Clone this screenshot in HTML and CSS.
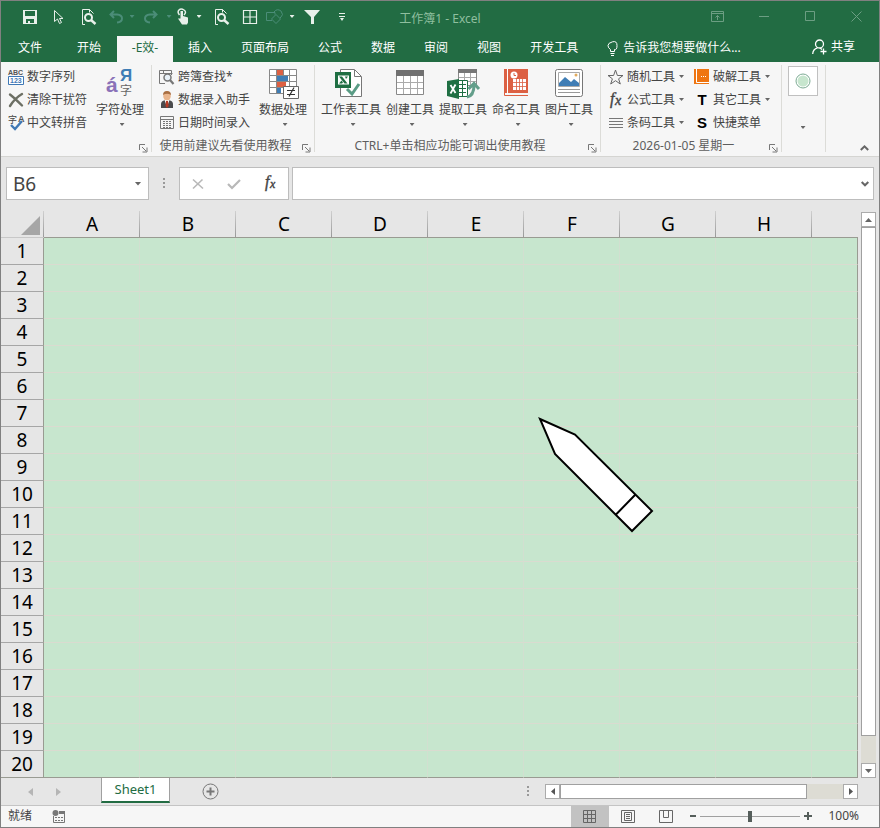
FILE: index.html
```html
<!DOCTYPE html>
<html lang="zh-CN">
<head>
<meta charset="utf-8">
<title>工作簿1 - Excel</title>
<link rel="stylesheet" href="styles.css">
</head>
<body>
<header class="titlebar">
  <div class="quick">
    <button aria-label="保存"><svg width="14" height="14" viewBox="0 0 14 14"><path fill="#e8f0ea" fill-rule="evenodd" d="M0 0h14v14H0zM2 1v5h10V1zM3 9v4h2v-2h2v2h4V9z"/></svg></button>
    <button aria-label="选择"><svg width="12" height="16" viewBox="0 0 12 16" fill="none" stroke="#e8f0ea"><path d="M1.500 1.500v11l3-2.500 2 4.500 2-1-2-4h3.500z"/></svg></button>
    <button aria-label="打印预览"><svg width="16" height="16" viewBox="0 0 16 16" fill="none" stroke="#e8f0ea"><path d="M4 15.500H1.500V.5h7l4 4M8.500.5v3"/><circle cx="7.500" cy="8.500" r="3.500" stroke-width="2"/><path d="M10 11l4.500 4" stroke-width="2.500"/></svg></button>
    <button aria-label="撤消"><svg width="14" height="14" viewBox="0 0 14 14" fill="none" stroke="#4b8d78" stroke-width="2"><path d="M5 1L1.500 4.500 5 8M2 4.500h6q5 .5 5 4T8 12.500"/></svg></button>
    <button aria-label="撤消列表"><i class="caret dim"></i></button>
    <button aria-label="恢复"><svg width="14" height="14" viewBox="0 0 14 14" fill="none" stroke="#4b8d78" stroke-width="2"><path d="M9 1l3.500 3.500L9 8M12 4.500H6q-5 .5-5 4t5 4"/></svg></button>
    <button aria-label="恢复列表"><i class="caret dim"></i></button>
    <button aria-label="触摸模式"><svg width="13" height="17" viewBox="0 0 13 17"><path d="M2.500 7Q0 4 2 2t5 0 0 5" fill="none" stroke="#e8f0ea" stroke-width="1.500"/><path fill="#e8f0ea" d="M3.500 3h2.500v5l5 1.500v5l-1 2H5L1 10.500h2.500z"/></svg></button>
    <button aria-label="触摸模式列表"><i class="caret"></i></button>
    <button aria-label="查找"><svg width="16" height="16" viewBox="0 0 16 16" fill="none" stroke="#e8f0ea"><path d="M4 15.500H1.500V.5h7l4 4M8.500.5v3"/><circle cx="7.500" cy="8.500" r="3.500" stroke-width="2"/><path d="M10 11l4.500 4" stroke-width="2.500"/></svg></button>
    <button aria-label="边框"><svg width="14" height="14" viewBox="0 0 14 14" fill="none" stroke="#e8f0ea"><path d="M.5.5h13v13H.5zM7 1v12M1 7h12" stroke-width="1.200"/></svg></button>
    <button aria-label="形状"><svg width="17" height="15" viewBox="0 0 17 15" fill="none" stroke="#4b8d78"><path d="M6 11.500H.5v-8H9v2M8 3q3-4 7-1 3 4 0 6l-1 1M10 5.500l4.500 4.500-4.500 4.500L5.500 10z"/></svg></button>
    <button aria-label="形状列表"><i class="caret"></i></button>
    <button aria-label="筛选"><svg width="16" height="14" viewBox="0 0 16 14"><path fill="#e8f0ea" d="M0 0h16L10 7v7H7V7z"/></svg></button>
    <button aria-label="自定义快速访问工具栏"><svg width="6" height="8" viewBox="0 0 6 8"><path fill="#e8f0ea" d="M0 0h6v1H0zM0 3h6v1H0zM1 5h4L3 8z"/></svg></button>
  </div>
  <h1>工作簿1 - Excel</h1>
  <div class="window-controls">
    <button aria-label="功能区显示选项"><svg width="14" height="11" viewBox="0 0 14 11"><path d="M.5.5h12v10H.5zM1 2.500h12M6.500 9V4.500M4.500 6.500l2-2 2 2"/></svg></button>
    <button aria-label="最小化"><svg width="11" height="11" viewBox="0 0 11 11"><path d="M0 5.500h10"/></svg></button>
    <button aria-label="最大化"><svg width="11" height="11" viewBox="0 0 11 11"><path d="M.5.5h9v9h-9z"/></svg></button>
    <button aria-label="关闭"><svg width="11" height="11" viewBox="0 0 11 11"><path d="M.5.5l10 10M10.500.5l-10 10"/></svg></button>
  </div>
</header>
<nav class="tabs">
  <button class="file">文件</button><button>开始</button><button class="active">-E效-</button><button>插入</button><button>页面布局</button><button>公式</button><button>数据</button><button>审阅</button><button>视图</button><button>开发工具</button>
  <button class="tell"><svg width="11" height="15" viewBox="0 0 11 15" fill="none" stroke="#fff"><path d="M3.500 10.500v-2Q1 7 1 4.500T5.500.8 10 4.500 7.500 8.500v2zM3.500 12.500h4M4 14.500h3"/></svg>告诉我您想要做什么...</button>
  <button class="share"><svg width="15" height="16" viewBox="0 0 15 16" fill="none" stroke="#fff" stroke-width="1.300"><circle cx="7.500" cy="5" r="4"/><path d="M.7 15q.3-5 4.800-6.200M8 9l2 1.500M11.500 9.500v6M8.500 12.500h6"/></svg>共享</button>
</nav>
<main>
<section class="ribbon">
  <div class="group g1">
    <div class="tools">
      <div class="stack">
        <button><svg width="16" height="16" viewBox="0 0 16 16"><text x="0" y="6" class="abc">ABC</text><path d="M.5 7.500h15v8H.5z" fill="#fff" stroke="#3f78b5"/><text x="2" y="14" class="num">123</text></svg>数字序列</button>
        <button><svg width="16" height="16" viewBox="0 0 16 16" fill="none" stroke="#6c6f64" stroke-linecap="round"><path d="M2 2.500q5 4 12 11M14 2Q7 6 2 14" stroke-width="2.400"/></svg>清除干扰符</button>
        <button><svg width="16" height="16" viewBox="0 0 16 16"><text x="0" y="8" class="zi">字</text><text x="10" y="7" class="abc big">A</text><path d="M3 10l4 4 7-8" fill="none" stroke="#3f78b5" stroke-width="2.400"/></svg>中文转拼音</button>
      </div>
      <button class="large"><svg width="30" height="32" viewBox="0 0 30 32"><text x="1" y="25" class="acute">á</text><text x="15" y="14" class="ya">Я</text><text x="15" y="28" class="zi lg">字</text></svg>字符处理<i class="caret"></i></button>
    </div>
    <footer><span></span><button class="launch" aria-label="字符选项"><svg width="9" height="9" viewBox="0 0 9 9"><path d="M.5 6V.5H6M3 3l4 4M8 3.500V8H3.500" /></svg></button></footer>
  </div>
  <div class="group g2">
    <div class="tools">
      <div class="stack">
        <button><svg width="16" height="16" viewBox="0 0 16 16" fill="none" stroke="#777"><path d="M6 14.500H.5v-13h12M.5 4.500h13M4.500 1.500v3M12.500 1.500V6"/><circle cx="8.500" cy="8.500" r="3.500" fill="#e8f1f8" stroke-width="1.500"/><path d="M11 11l3.500 4" stroke-width="2.200"/></svg>跨簿查找*</button>
        <button><svg width="16" height="17" viewBox="0 0 16 17"><path d="M2 17v-4q0-3 4-4h4q4 1 4 4v4z" fill="#4b4b4d"/><path d="M5.500 9h5L8 16z" fill="#fff"/><path d="M7 10h2l.7 5L8 17l-1.500-2z" fill="#b83a24"/><ellipse cx="8" cy="5" rx="3.800" ry="4.500" fill="#e9b58c"/><path d="M4 4q0-4 4-4t4 4Q8 1.500 4 4" fill="#a96f42"/></svg>数据录入助手</button>
        <button><svg width="16" height="16" viewBox="0 0 16 16" fill="none" stroke="#777"><path d="M1.500 1.500h13v12h-13zM2 4.500h12"/><path d="M4 6.500h9M4 8.500h9M4 10.500h9M4 12.500h9" stroke-dasharray="2 1"/></svg>日期时间录入</button>
      </div>
      <button class="large"><svg width="32" height="32" viewBox="0 0 32 32"><path d="M2.500 2.500h27v24h-27z" fill="#fff" stroke="#888"/><path d="M3 8.500h26M3 14.500h26M3 20.500h26M9.500 3v23M16.500 3v23M22.500 3v23" stroke="#888"/><path d="M10 3h6v5h-6zM10 15h9v5h-9z" fill="#dc6043"/><path d="M10 9h11v5H10zM10 21h4v5h-4z" fill="#3f7db5"/><path d="M16.500 19.500h15v12h-15z" fill="#fff" stroke="#666"/><path d="M20 23.500h8M20 27.500h8M27 20.500l-5 9" stroke="#333" fill="none" stroke-width="1.200"/></svg>数据处理<i class="caret"></i></button>
    </div>
    <footer><span>使用前建议先看使用教程</span><button class="launch" aria-label="数据选项"><svg width="9" height="9" viewBox="0 0 9 9"><path d="M.5 6V.5H6M3 3l4 4M8 3.500V8H3.500"/></svg></button></footer>
  </div>
  <div class="group g3">
    <div class="tools">
      <button class="large"><svg width="32" height="32" viewBox="0 0 32 32"><path d="M5.500 2.500h14l7 7v20h-21z" fill="#fff" stroke="#777"/><path d="M19.500 3v6.500H26" fill="none" stroke="#777"/><path d="M0 5h16v16H0z" fill="#1f6f43"/><path d="M3 8.500h11v9H3z" fill="#fff"/><path d="M4 9.500h3l5.500 7h-3zM10 9.500h3l-2 2.500M4 16.500l2.500-3 1.500 2-1 1z" fill="#1f6f43"/><path d="M12 22l5 5 7-10" fill="none" stroke="#5a9c85" stroke-width="3"/></svg>工作表工具<i class="caret"></i></button>
      <button class="large"><svg width="32" height="32" viewBox="0 0 32 32"><path d="M2.500 3.500h27v24h-27z" fill="#fff" stroke="#888"/><path d="M2 3h28v6H2z" fill="#707070"/><path d="M3 15.500h26M3 21.500h26M9.500 9v18M16.500 9v18M23.500 9v18" stroke="#aaa"/></svg>创建工具<i class="caret"></i></button>
      <button class="large"><svg width="32" height="32" viewBox="0 0 32 32"><path d="M11.500 2.500h18v16h-18z" fill="#fff" stroke="#888"/><path d="M11 2h19v4H11z" fill="#777"/><path d="M12 10.500h17M12 14.500h17M17.500 6v12M23.500 6v12" stroke="#aaa"/><path d="M10.500 13.500h10v16h-10z" fill="#fff" stroke="#1f6f43"/><path d="M11 17.500h8M11 21.500h8M11 25.500h8M15.500 14v15" stroke="#1f6f43"/><path d="M0 14l12-2v20L0 29z" fill="#1f6f43"/><path d="M3.500 18l5 8M8.500 17.500L3.500 26.500" stroke="#fff" stroke-width="1.800"/><path d="M20 30q7-1 7-12M21.500 22l5.500-5.500 5 5.500" fill="none" stroke="#639e8a" stroke-width="3"/></svg>提取工具<i class="caret"></i></button>
      <button class="large"><svg width="32" height="32" viewBox="0 0 32 32"><path d="M4 2h24v24H4z" fill="#dc6043"/><path d="M4.500 2v26.500H28" fill="none" stroke="#dc6043"/><path d="M7.500 2v25" stroke="#fff"/><circle cx="14" cy="8" r="3.500" fill="#fff"/><path d="M14 6v2.500h2" stroke="#dc6043" fill="none"/><path d="M13 12h13v11H13z" fill="#fff"/><path d="M13 15.500h13M13 19.500h13M16.500 12v11M19.500 12v11M22.500 12v11" stroke="#dc6043" stroke-width=".8"/></svg>命名工具<i class="caret"></i></button>
      <button class="large"><svg width="32" height="32" viewBox="0 0 32 32"><rect x="2.500" y="2.500" width="27" height="27" rx="2" fill="#fff" stroke="#777"/><path d="M5.500 5.500h21v14h-21z" fill="#fff" stroke="#aaa"/><path d="M6 19v-3l6-6 6 5 3-3 5 4v3z" fill="#3f7db5"/><circle cx="23" cy="8" r="1.500" fill="#e2ab5c"/><path d="M5 22.500h22M5 25.500h22" stroke="#999"/></svg>图片工具<i class="caret"></i></button>
    </div>
    <footer><span>CTRL+单击相应功能可调出使用教程</span><button class="launch" aria-label="工具选项"><svg width="9" height="9" viewBox="0 0 9 9"><path d="M.5 6V.5H6M3 3l4 4M8 3.500V8H3.500"/></svg></button></footer>
  </div>
  <div class="group g4">
    <div class="tools">
      <div class="stack">
        <button><svg width="16" height="16" viewBox="0 0 16 16" fill="none" stroke="#666"><path d="M7.500 1l1.900 5.500h5.600l-4.400 3.300 1.700 5.200-4.800-3.300L2.700 15l1.700-5.200L0 6.500h5.600z"/></svg>随机工具<i class="caret"></i></button>
        <button><svg width="16" height="16" viewBox="0 0 16 16"><text x="2" y="12" class="fx">f</text><text x="7" y="13" class="fx small">x</text></svg>公式工具<i class="caret"></i></button>
        <button><svg width="16" height="16" viewBox="0 0 16 16" stroke="#777"><path d="M1 3.500h14M1 6.500h14M1 9.500h14M1 12.500h14"/></svg>条码工具<i class="caret"></i></button>
      </div>
      <div class="stack">
        <button><svg width="16" height="16" viewBox="0 0 16 16"><path d="M0 0h15v15H0z" fill="#ef7511"/><path d="M2.500 0v13.500H15" stroke="#fff" fill="none"/><path d="M7 7h1v1H7zM9 7h1v1H9zM11 7h1v1h-1z" fill="#fff"/></svg>破解工具<i class="caret"></i></button>
        <button><svg width="16" height="16" viewBox="0 0 16 16"><text x="8" y="13" class="letter">T</text></svg>其它工具<i class="caret"></i></button>
        <button><svg width="16" height="16" viewBox="0 0 16 16"><text x="8" y="13" class="letter">S</text></svg>快捷菜单</button>
      </div>
    </div>
    <footer><span>2026-01-05 星期一</span><button class="launch" aria-label="其它选项"><svg width="9" height="9" viewBox="0 0 9 9"><path d="M.5 6V.5H6M3 3l4 4M8 3.500V8H3.500"/></svg></button></footer>
  </div>
  <div class="group g5">
    <button class="swatch" aria-label="护眼颜色"><span><svg width="16" height="16" viewBox="0 0 16 16"><circle cx="8" cy="8" r="7" fill="#fff" stroke="#7cab93"/><circle cx="8" cy="8" r="5.500" fill="#c7e6ce"/></svg></span><i class="caret"></i></button>
  </div>
  <button class="collapse" aria-label="折叠功能区"><svg width="9" height="6" viewBox="0 0 9 6" fill="none" stroke="#666" stroke-width="2"><path d="M.8 5l3.700-3.700L8.200 5"/></svg></button>
</section>
<section class="formula">
  <div class="box name"><input aria-label="名称框" value="B6"><button aria-label="名称列表"><i class="caret wide"></i></button></div>
  <svg class="dots" width="3" height="11" viewBox="0 0 3 11"><path fill="#999" d="M0 0h2v2H0zM0 4h2v2H0zM0 8h2v2H0z"/></svg>
  <div class="box actions">
    <button aria-label="取消"><svg width="12" height="12" viewBox="0 0 12 12" fill="none" stroke="#b8b8b8" stroke-width="1.600"><path d="M1 1.500l10 9M10.500 1.500L1 10.500"/></svg></button>
    <button aria-label="输入"><svg width="14" height="12" viewBox="0 0 14 12" fill="none" stroke="#b8b8b8" stroke-width="2.200"><path d="M1 6l4 4 8-8"/></svg></button>
    <button aria-label="插入函数"><svg width="14" height="15" viewBox="0 0 14 15"><text x="2" y="11" class="fx">f</text><text x="7" y="12" class="fx tiny">x</text></svg></button>
  </div>
  <div class="box entry"><input aria-label="编辑栏"><button aria-label="展开编辑栏"><svg width="8" height="6" viewBox="0 0 8 6" fill="none" stroke="#666" stroke-width="2"><path d="M.7 1L4 4.300 7.300 1"/></svg></button></div>
</section>
<section class="sheet">
  <div class="canvas">
  <table>
    <colgroup><col class="rowcol"><col class="c"><col class="c"><col class="c"><col class="c"><col class="c"><col class="c"><col class="c"><col class="c"><col></colgroup>
    <thead><tr><th aria-label="全选"><i class="corner"></i></th><th>A</th><th>B</th><th>C</th><th>D</th><th>E</th><th>F</th><th>G</th><th>H</th><th></th></tr></thead>
    <tbody>
    <tr><th>1<td><td><td><td><td><td><td><td><td>
    <tr><th>2<td><td><td><td><td><td><td><td><td>
    <tr><th>3<td><td><td><td><td><td><td><td><td>
    <tr><th>4<td><td><td><td><td><td><td><td><td>
    <tr><th>5<td><td><td><td><td><td><td><td><td>
    <tr><th>6<td><td><td><td><td><td><td><td><td>
    <tr><th>7<td><td><td><td><td><td><td><td><td>
    <tr><th>8<td><td><td><td><td><td><td><td><td>
    <tr><th>9<td><td><td><td><td><td><td><td><td>
    <tr><th>10<td><td><td><td><td><td><td><td><td>
    <tr><th>11<td><td><td><td><td><td><td><td><td>
    <tr><th>12<td><td><td><td><td><td><td><td><td>
    <tr><th>13<td><td><td><td><td><td><td><td><td>
    <tr><th>14<td><td><td><td><td><td><td><td><td>
    <tr><th>15<td><td><td><td><td><td><td><td><td>
    <tr><th>16<td><td><td><td><td><td><td><td><td>
    <tr><th>17<td><td><td><td><td><td><td><td><td>
    <tr><th>18<td><td><td><td><td><td><td><td><td>
    <tr><th>19<td><td><td><td><td><td><td><td><td>
    <tr><th>20<td><td><td><td><td><td><td><td><td>
    </tbody>
  </table>
  <svg class="pencil" width="120" height="120" viewBox="0 0 120 120"><path d="M4 4l35 15.500L116 96l-20 20L19 39zM99 80L80 99.500" fill="#fff" stroke="#000" stroke-width="2"/></svg>
  </div>
  <div class="vscroll">
    <button aria-label="向上滚动"><svg width="7" height="4" viewBox="0 0 7 4"><path fill="#666" d="M0 4L3.500 0 7 4z"/></svg></button>
    <div class="thumb"></div><div class="rest"></div>
    <button aria-label="向下滚动"><svg width="7" height="4" viewBox="0 0 7 4"><path fill="#666" d="M0 0h7L3.500 4z"/></svg></button>
  </div>
</section>
</main>
<section class="sheetbar">
  <div class="arrows">
    <button aria-label="上一张工作表"><svg width="5" height="8" viewBox="0 0 5 8"><path fill="#b5b5b5" d="M5 0v8L0 4z"/></svg></button>
    <button aria-label="下一张工作表"><svg width="5" height="8" viewBox="0 0 5 8"><path fill="#b5b5b5" d="M0 0v8l5-4z"/></svg></button>
  </div>
  <button class="sheettab">Sheet1</button>
  <button class="add" aria-label="新工作表"><svg width="17" height="17" viewBox="0 0 17 17" fill="none" stroke="#777"><circle cx="8.500" cy="8.500" r="7.500"/><path d="M8.500 4.500v8M4.500 8.500h8" stroke-width="2"/></svg></button>
  <svg class="dots" width="3" height="11" viewBox="0 0 3 11"><path fill="#999" d="M0 0h2v2H0zM0 4h2v2H0zM0 8h2v2H0z"/></svg>
  <div class="hscroll">
    <button aria-label="向左滚动"><svg width="4" height="7" viewBox="0 0 4 7"><path fill="#555" d="M4 0v7L0 3.500z"/></svg></button>
    <div class="thumb"></div><div class="rest"></div>
    <button aria-label="向右滚动"><svg width="4" height="7" viewBox="0 0 4 7"><path fill="#555" d="M0 0v7l4-3.500z"/></svg></button>
  </div>
</section>
<footer class="status">
  <span class="ready">就绪</span>
  <button class="macro" aria-label="录制宏"><svg width="14" height="13" viewBox="0 0 14 13"><path d="M1.500 6v6.500h11v-11H7" fill="none" stroke="#777"/><path fill="#777" d="M7 1h6v3H7z"/><circle cx="3.500" cy="3" r="3" fill="#777"/><path d="M3 7.500h9M3 10.500h9" stroke="#777" stroke-dasharray="2 1"/></svg></button>
  <div class="views">
    <button class="on" aria-label="普通"><svg width="14" height="14" viewBox="0 0 14 14"><path d="M.5.5h12v12H.5zM1 4.500h12M1 8.500h12M4.500 1v12M8.500 1v12"/></svg></button>
    <button aria-label="页面布局"><svg width="14" height="14" viewBox="0 0 14 14"><path d="M.5.5h13v12H.5zM3.500 2.500h7v8h-7zM5 4.500h4M5 6.500h4M5 8.500h4"/></svg></button>
    <button aria-label="分页预览"><svg width="14" height="14" viewBox="0 0 14 14"><path d="M.5.5h13v12H.5zM4.500 1v6.500h5V1"/></svg></button>
  </div>
  <button class="zoom" aria-label="缩小"><svg width="8" height="8" viewBox="0 0 8 8"><path d="M1 4h6" stroke="#555e5b" stroke-width="2"/></svg></button>
  <input type="range" min="0" max="100" value="50" aria-label="显示比例">
  <button class="zoom" aria-label="放大"><svg width="8" height="8" viewBox="0 0 8 8"><path d="M0 4h8M4 0v8" stroke="#555e5b" stroke-width="2"/></svg></button>
  <button class="percent">100%</button>
</footer>
</body>
</html>
```
FILE: styles.css
```css
* { box-sizing: border-box; }
body {
  margin: 0;
  min-height: 100vh;
  display: flex;
  flex-direction: column;
  border: 1px solid #808080;
  background: #e6e6e6;
  color: #444;
  font: 12px/16px "Noto Sans", "Noto Sans CJK SC", sans-serif;
}
button {
  display: flex;
  align-items: center;
  justify-content: center;
  margin: 0;
  padding: 0;
  border: 0;
  background: none;
  color: inherit;
  font: inherit;
  white-space: nowrap;
}
input { border: 0; padding: 0; margin: 0; background: none; color: inherit; font: inherit; }
svg { display: block; flex: none; overflow: visible; }
main { flex: 1; display: flex; flex-direction: column; }

.caret {
  flex: none;
  width: 5px;
  height: 3px;
  background: #666;
  clip-path: polygon(0 0, 100% 0, 50% 100%);
}
.caret.wide { width: 7px; height: 4px; }

.titlebar {
  display: grid;
  grid-template-columns: 1fr auto 1fr;
  height: 35px;
  background: #226c43;
}
.quick {
  display: grid;
  grid-template-columns: 30px 28px 32px 22px 10px 28px 8px 20px 12px 34px 22px 26px 10px 30px 30px;
  padding: 0 0 4px 14px;
}
.quick .caret { background: #e8f0ea; }
.quick .caret.dim { background: #4b8d78; }
.titlebar h1 {
  margin: 0;
  font-size: 12px;
  line-height: 35px;
  font-weight: normal;
  color: #8fbf9f;
}
.window-controls { display: flex; justify-content: flex-end; padding-bottom: 4px; }
.window-controls button { width: 46px; }
.window-controls path { fill: none; stroke: #6c9e83; }

.tabs { display: flex; height: 26px; background: #226c43; color: #fff; }
.tabs button { padding: 0 14px 2px 15px; }
.tabs .file { padding: 0 20px 2px 17px; }
.tabs .active { width: 56px; margin-left: 2px; padding: 0 0 2px; background: #f6f6f6; color: #226c43; }
.tabs .tell { gap: 5px; padding-right: 0; }
.tabs .share { margin-left: auto; gap: 4px; padding: 0 24px 4px 0; }

.ribbon {
  display: flex;
  height: 95px;
  padding: 3px 0 0;
  background: #f6f6f6;
  border-bottom: 1px solid #d5d5d2;
}
.group { border-right: 1px solid #dcdcd8; margin-bottom: 4px; }
.tools { display: flex; height: 69px; }
.stack button { gap: 3px; height: 23px; }
.stack { display: flex; flex-direction: column; align-items: flex-start; }
.stack .caret { margin-left: 1px; }
.large { flex-direction: column; justify-content: flex-start; }
.large svg { margin: 2px 0 3px; }
.large .caret { margin: 5px 0 0 4px; }
.group footer { display: flex; align-items: center; height: 23px; padding-right: 1px; color: #5e5e5e; }
.group footer span { flex: 1; text-align: center; }
.launch { width: 14px; height: 14px; padding-top: 5px; }
.launch path { fill: none; stroke: #777; }
.g1 { width: 151px; padding-left: 7px; }
.g1 .tools { gap: 9px; }
.g2 { width: 163px; }
.g2 .tools { gap: 9px; padding-left: 7px; }
.g3 { width: 286px; }
.g3 .tools { gap: 5px; padding-left: 6px; }
.g4 { width: 181px; }
.g4 .tools { gap: 10px; padding-left: 7px; }
.g5 { width: 44px; padding: 1px 6px; }
.swatch { flex-direction: column; gap: 30px; }
.swatch span { display: grid; place-items: center; width: 30px; height: 30px; background: #fff; border: 1px solid #c0c0c0; }
.collapse { margin: auto 10px 5px auto; }

.abc { font: bold 7px "Liberation Sans", sans-serif; fill: #555; }
.abc.big { font-size: 9px; }
.num { font: bold 7px "Liberation Sans", sans-serif; fill: #3f78b5; }
.zi { font: 9px "Noto Sans CJK SC", sans-serif; fill: #444; }
.zi.lg { font-size: 12px; fill: #666; }
.acute { font: bold 21px "Liberation Sans", sans-serif; fill: #8a72b8; }
.ya { font: bold 17px "Liberation Sans", sans-serif; fill: #3f7db5; }
.fx { font: italic 16px "Liberation Serif", serif; fill: #444; stroke: #444; stroke-width: .4px; }
.fx.small { font-size: 14px; }
.fx.tiny { font-size: 12px; }
.letter { font: bold 15px "Liberation Sans", sans-serif; fill: #000; text-anchor: middle; }

.formula { display: flex; height: 54px; padding: 10px 5px 11px; }
.box { display: flex; background: #fff; border: 1px solid #bdbdbd; }
.box input { flex: 1; min-width: 0; padding-left: 6px; font-size: 19px; outline: none; }
.name { width: 143px; }
.name button { width: 20px; }
.dots { margin: auto 13px; }
.formula .dots { margin: 11px 13px 0 14px; }
.actions { width: 110px; }
.actions button { flex: 1; }
.entry { flex: 1; margin-left: 3px; }
.entry button { width: 16px; }

.sheet { display: flex; gap: 3px; padding-right: 3px; }
.canvas { position: relative; flex: 1; }
table { width: 100%; table-layout: fixed; border-collapse: separate; border-spacing: 0; }
.rowcol { width: 43px; }
.c { width: 96px; }
th, td { height: 27px; padding: 0; }
th { font-size: 19px; line-height: 22px; font-weight: normal; color: #000; text-align: center; }
thead th { border-bottom: 1px solid #999b92; background: linear-gradient(#cfcfcf, #999) right / 1px 100% no-repeat; }
thead th:last-child { background: none; }
thead th:first-child { border-bottom-color: #c8c8c8; }
tbody th { border-right: 1px solid #999b92; border-bottom: 1px solid #a6a6a6; }
td { background: #c7e6ce; border-right: 1px solid #d2dfd0; border-bottom: 1px solid #dadbd0; }
td:last-child { border-right-color: #999b92; }
tbody tr:last-child > * { border-bottom-color: #999b92; }
.corner { display: block; width: 19px; height: 19px; margin: 3px 0 0 20px; background: #a6a6a6; clip-path: polygon(100% 0, 100% 100%, 0 100%); }
.pencil { position: absolute; left: 535px; top: 204px; }

.vscroll { display: flex; flex-direction: column; width: 15px; padding-top: 1px; }
.vscroll button { height: 15px; border: 1px solid #ababab; background: #fff; }
.thumb { background: #fff; border: 1px solid #a0a0a0; }
.rest { background: #dddcd4; }
.vscroll .thumb { flex: 509; }
.vscroll .rest { flex: 27; }

.sheetbar { display: flex; align-items: center; height: 27px; padding-right: 21px; }
.arrows { display: flex; width: 100px; padding-left: 27px; gap: 23px; }
.sheettab {
  align-self: flex-start;
  width: 69px;
  height: 25px;
  padding-bottom: 1px;
  border: 1px solid #a0a0a0;
  border-top: 0;
  border-bottom: 2px solid #226c43;
  background: #fff;
  color: #226c43;
  font-size: 13px;
}
.add { margin-left: 32px; }
.sheetbar .dots { margin: 0 15px 0 auto; }
.hscroll { display: flex; flex: 0 1 313px; height: 15px; }
.hscroll button { width: 15px; border: 1px solid #ababab; background: #fff; }
.hscroll .thumb { flex: 247; }
.hscroll .rest { flex: 36; }

.status { display: flex; align-items: center; height: 22px; padding: 0 20px 1px 0; background: #f6f6f6; border-top: 1px solid #c4c4c4; }
.ready { padding: 0 20px 1px 7px; }
.views { display: flex; align-self: stretch; margin: 0 4px -1px auto; }
.views button { width: 38px; }
.views .on { background: #c2c2c2; }
.views path { fill: none; stroke: #666; }
.status input { width: 100px; height: 12px; margin: 0 4px 0 3px; appearance: none; background: linear-gradient(#a0a0a0, #a0a0a0) center / 100% 1px no-repeat; }
.status input::-webkit-slider-thumb { appearance: none; width: 4px; height: 11px; background: #555e5b; }
.percent { margin-left: 16px; }
```
